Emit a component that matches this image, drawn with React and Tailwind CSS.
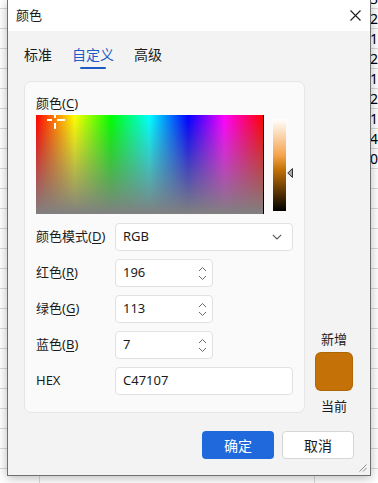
import React from "react";

const sheet = ["3", "2", "1", "2", "1", "2", "1", "4", "0", "", "", "", "", "", "", "", "", "", "", "", "", "", "", "", "", ""];

const Mn = ({ text, k }) => (
  <span>
    {text}(<span className="underline underline-offset-2">{k}</span>)
  </span>
);

const Spin = () => (
  <svg width="9" height="15" viewBox="0 0 9 15" fill="none" stroke="#6b6b6b" strokeWidth="1">
    <path d="M1 5 L4.5 1.5 L8 5" />
    <path d="M1 10 L4.5 13.5 L8 10" />
  </svg>
);

const Row = ({ label, children }) => (
  <div className="flex items-center h-[28px]">
    <div className="w-[79px] text-[13px] text-[#1b1b1b]">{label}</div>
    {children}
  </div>
);

const NumBox = ({ value }) => (
  <div className="w-[98px] h-[28px] bg-white border border-[#e1e1e1] rounded-[4px] flex items-center justify-between pl-[7px] pr-[5px] text-[13px] text-[#1b1b1b]">
    <span>{value}</span>
    <Spin />
  </div>
);

export default function App() {
  return (
    <div className="relative w-[378px] h-[483px] overflow-hidden bg-white font-['Noto_Sans','Noto_Sans_CJK_SC',sans-serif]">
      {/* spreadsheet behind */}
      <div className="flex flex-col -mt-[11px]">
        {sheet.map((n, i) => (
          <div key={i} className="flex h-[20px] border-b border-[#dadada] shrink-0">
            <div className="w-[40px] border-r border-[#dadada]" />
            <div className="w-[275px] border-r border-[#dadada]" />
            <div className="flex-1 pl-[55px] text-[14px] leading-[19px] text-black">{n}</div>
          </div>
        ))}
      </div>

      {/* dialog */}
      <div className="absolute left-[7px] top-0 w-[364px] h-[476px] flex flex-col bg-[#f3f3f3] border-x border-b border-[#6f6f6f] shadow-[0_2px_10px_rgba(0,0,0,0.28)]">
        <div className="h-[31px] shrink-0 bg-white flex items-center justify-between pl-[8px] pr-[9px]">
          <span className="text-[13px] text-[#1b1b1b]">颜色</span>
          <svg width="11" height="11" viewBox="0 0 11 11" stroke="#1b1b1b" strokeWidth="1.1">
            <path d="M0.5 0.5 L10.5 10.5 M10.5 0.5 L0.5 10.5" />
          </svg>
        </div>

        <div className="flex flex-col px-[16px] pt-[14px]">
          <div className="flex gap-[20px] text-[14px] leading-[20px]">
            <div className="flex flex-col items-center">
              <span className="text-[#1b1b1b]">标准</span>
              <div className="h-[2px] mt-[2px]" />
            </div>
            <div className="flex flex-col items-center">
              <span className="text-[#1c5cc6]">自定义</span>
              <div className="h-[2px] w-[26px] mt-[2px] rounded-full bg-[#1c5cc6]" />
            </div>
            <div className="flex flex-col items-center">
              <span className="text-[#1b1b1b]">高级</span>
              <div className="h-[2px] mt-[2px]" />
            </div>
          </div>

          <div className="flex mt-[12px]">
            <div className="w-[281px] flex flex-col bg-[#fafafa] border border-[#e6e6e6] rounded-[7px] pt-[11px] px-[11px] pb-[17px]">
              <div className="text-[13px] leading-[20px] text-[#1b1b1b]">
                <Mn text="颜色" k="C" />
              </div>
              <div className="flex mt-[2px]">
                <div className="relative w-[230px] h-[99px] border-r border-black bg-[linear-gradient(to_bottom,rgba(128,128,128,0)_0%,#808080_100%),linear-gradient(to_right,#f00_0%,#ff0_17%,#0f0_33%,#0ff_50%,#00f_67%,#f0f_83%,#f00_100%)]">
                  <div className="absolute left-[11px] top-[4px] w-[5px] h-[2px] bg-white" />
                  <div className="absolute left-[21px] top-[4px] w-[8px] h-[2px] bg-white" />
                  <div className="absolute left-[18px] top-0 w-[2px] h-[3px] bg-white" />
                  <div className="absolute left-[18px] top-[8px] w-[2px] h-[6px] bg-white" />
                </div>
                <div className="ml-[9px] mt-[4px] w-[13px] h-[92px] bg-[linear-gradient(to_bottom,#fff_0%,#f5a24a_40%,#c47107_55%,#000_100%)]" />
                <svg className="ml-[1px] mt-[53px]" width="6" height="10" viewBox="0 0 6 10">
                  <path d="M5.5 0.5 L0.8 5 L5.5 9.5 Z" fill="#a9a9a9" stroke="#2b2b2b" strokeWidth="1" />
                </svg>
              </div>

              <div className="flex flex-col gap-[8px] mt-[9px]">
                <Row label={<Mn text="颜色模式" k="D" />}>
                  <div className="w-[178px] h-[28px] bg-white border border-[#e1e1e1] rounded-[4px] flex items-center justify-between pl-[7px] pr-[10px] text-[13px] text-[#1b1b1b]">
                    <span>RGB</span>
                    <svg width="10" height="6" viewBox="0 0 10 6" fill="none" stroke="#555" strokeWidth="1.1">
                      <path d="M0.8 0.8 L5 5 L9.2 0.8" />
                    </svg>
                  </div>
                </Row>
                <Row label={<Mn text="红色" k="R" />}>
                  <NumBox value="196" />
                </Row>
                <Row label={<Mn text="绿色" k="G" />}>
                  <NumBox value="113" />
                </Row>
                <Row label={<Mn text="蓝色" k="B" />}>
                  <NumBox value="7" />
                </Row>
                <Row label="HEX">
                  <div className="w-[178px] h-[28px] bg-white border border-[#e1e1e1] rounded-[4px] flex items-center pl-[7px] text-[13px] text-[#1b1b1b]">
                    C47107
                  </div>
                </Row>
              </div>
            </div>

            <div className="ml-[10px] w-[38px] flex flex-col justify-end items-center -mb-[3px] text-[13px] leading-[20px] text-[#1b1b1b]">
              <span>新增</span>
              <div className="mt-[3px] w-[38px] h-[39px] rounded-[6px] bg-[#c47107] border border-black/10" />
              <span className="mt-[5px]">当前</span>
            </div>
          </div>

          <div className="flex justify-end gap-[8px] mt-[18px] text-[14px]">
            <div className="w-[72px] h-[28px] rounded-[4px] bg-[#1f69dc] text-white flex items-center justify-center">确定</div>
            <div className="w-[72px] h-[28px] rounded-[4px] bg-white border border-[#d6d6d6] text-[#1b1b1b] flex items-center justify-center">取消</div>
          </div>
        </div>

        <svg className="absolute right-[3px] bottom-[3px]" width="8" height="8" viewBox="0 0 8 8" stroke="#8a8a8a" strokeWidth="1">
          <path d="M7.5 0.5 L0.5 7.5 M7.5 4 L4 7.5" />
        </svg>
      </div>
    </div>
  );
}
